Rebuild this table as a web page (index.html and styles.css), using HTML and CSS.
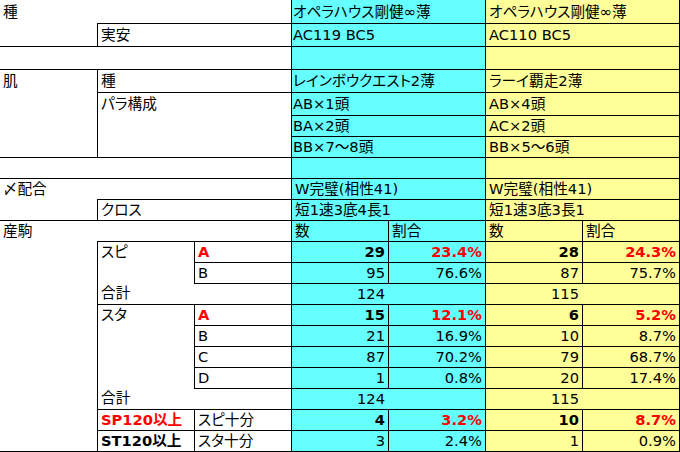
FILE: index.html
```html
<!DOCTYPE html>
<html lang="ja">
<head>
<meta charset="utf-8">
<title>配合比較</title>
<link rel="stylesheet" href="styles.css">
</head>
<body>
<div class="sheet">
  <!-- row 0 -->
  <div class="c hi rs2 r0">種</div>
  <div class="c hi s2"></div>
  <div class="c hi s2 l cy cyt r0">オペラハウス剛健∞薄</div>
  <div class="c hi s2 l ye r0">オペラハウス剛健∞薄</div>
  <!-- row 1 -->
  <div class="c hi s2 t l">実安</div>
  <div class="c hi s2 t l cy cyt">AC119 BC5</div>
  <div class="c hi s2 t l ye">AC110 BC5</div>
  <!-- row 2 -->
  <div class="c hi s3 t"></div>
  <div class="c hi s2 t l cy"></div>
  <div class="c hi s2 t l ye"></div>
  <!-- row 3 -->
  <div class="c hi rs4 t">肌</div>
  <div class="c hi s2 t l">種</div>
  <div class="c hi s2 t l cy cyt">レインボウクエスト2薄</div>
  <div class="c hi s2 t l ye">ラーイ覇走2薄</div>
  <!-- row 4 -->
  <div class="c hi s2 rs3 t l">パラ構成</div>
  <div class="c hi s2 t l cy cyt">AB×1頭</div>
  <div class="c hi s2 t l ye">AB×4頭</div>
  <!-- row 5 -->
  <div class="c s2 t l cy cyt">BA×2頭</div>
  <div class="c s2 t l ye">AC×2頭</div>
  <!-- row 6 -->
  <div class="c s2 t l cy cyt">BB×7～8頭</div>
  <div class="c s2 t l ye">BB×5～6頭</div>
  <!-- row 7 -->
  <div class="c s3 t"></div>
  <div class="c s2 t l cy"></div>
  <div class="c s2 t l ye"></div>
  <!-- row 8 -->
  <div class="c rs2 t">〆配合</div>
  <div class="c s2 t"></div>
  <div class="c s2 t l cy">W完璧(相性41)</div>
  <div class="c s2 t l ye">W完璧(相性41)</div>
  <!-- row 9 -->
  <div class="c s2 t l">クロス</div>
  <div class="c s2 t l cy">短1速3底4長1</div>
  <div class="c s2 t l ye">短1速3底3長1</div>
  <!-- row 10 -->
  <div class="c rs11 t">産駒</div>
  <div class="c s2 t"></div>
  <div class="c t l cy">数</div>
  <div class="c t l cy">割合</div>
  <div class="c t l ye">数</div>
  <div class="c t l ye">割合</div>
  <!-- row 11 -->
  <div class="c rs2 t l">スピ</div>
  <div class="c t l b red">A</div>
  <div class="c t l cy n b">29</div>
  <div class="c t l cy n b red">23.4%</div>
  <div class="c t l ye n b">28</div>
  <div class="c t l ye n b red">24.3%</div>
  <!-- row 12 -->
  <div class="c t l">B</div>
  <div class="c t l cy n">95</div>
  <div class="c t l cy n">76.6%</div>
  <div class="c t l ye n">87</div>
  <div class="c t l ye n">75.7%</div>
  <!-- row 13 -->
  <div class="c l">合計</div>
  <div class="c t"></div>
  <div class="c t l cy n">124</div>
  <div class="c t cy"></div>
  <div class="c t l ye n">115</div>
  <div class="c t ye"></div>
  <!-- row 14 -->
  <div class="c rs4 t l">スタ</div>
  <div class="c t l b red">A</div>
  <div class="c t l cy n b">15</div>
  <div class="c t l cy n b red">12.1%</div>
  <div class="c t l ye n b">6</div>
  <div class="c t l ye n b red">5.2%</div>
  <!-- row 15 -->
  <div class="c t l">B</div>
  <div class="c t l cy n">21</div>
  <div class="c t l cy n">16.9%</div>
  <div class="c t l ye n">10</div>
  <div class="c t l ye n">8.7%</div>
  <!-- row 16 -->
  <div class="c t l">C</div>
  <div class="c t l cy n">87</div>
  <div class="c t l cy n">70.2%</div>
  <div class="c t l ye n">79</div>
  <div class="c t l ye n">68.7%</div>
  <!-- row 17 -->
  <div class="c t l">D</div>
  <div class="c t l cy n">1</div>
  <div class="c t l cy n">0.8%</div>
  <div class="c t l ye n">20</div>
  <div class="c t l ye n">17.4%</div>
  <!-- row 18 -->
  <div class="c l">合計</div>
  <div class="c t"></div>
  <div class="c t l cy n">124</div>
  <div class="c t cy"></div>
  <div class="c t l ye n">115</div>
  <div class="c t ye"></div>
  <!-- row 19 -->
  <div class="c t l b red">SP120以上</div>
  <div class="c t l">スピ十分</div>
  <div class="c t l cy n b">4</div>
  <div class="c t l cy n b red">3.2%</div>
  <div class="c t l ye n b">10</div>
  <div class="c t l ye n b red">8.7%</div>
  <!-- row 20 -->
  <div class="c t l b">ST120以上</div>
  <div class="c t l">スタ十分</div>
  <div class="c t l cy n">3</div>
  <div class="c t l cy n">2.4%</div>
  <div class="c t l ye n">1</div>
  <div class="c t l ye n">0.9%</div>
</div>
</body>
</html>
```

FILE: styles.css
```css
html, body {
  margin: 0;
  padding: 0;
  background: #ffffff;
}

.sheet {
  display: grid;
  grid-template-columns: repeat(7, 97px);
  grid-template-rows: repeat(5, 23px) repeat(16, 21px);
  width: max-content;
  border-right: 1px solid #000;
  border-bottom: 1px solid #000;
  font-family: "DejaVu Sans", "Noto Sans CJK JP", sans-serif;
  font-feature-settings: "palt" 1;
  font-size: 14.67px;
  color: #000;
}

.c {
  box-sizing: border-box;
  white-space: nowrap;
  line-height: 20px;
  padding: 0 3px 0 3px;
  min-width: 0;
}

.hi { line-height: 22px; }
.r0 { padding-top: 1px; }

.t { border-top: 1px solid #000; }
.l { border-left: 1px solid #000; }

.s2 { grid-column: span 2; }
.s3 { grid-column: span 3; }
.rs2 { grid-row: span 2; }
.rs3 { grid-row: span 3; }
.rs4 { grid-row: span 4; }
.rs11 { grid-row: span 11; }

.cy { background: #66ffff; }
.ye { background: #ffff99; }
.cyt { padding-left: 1px; }

.n { text-align: right; padding-right: 3px; }
.b { font-weight: bold; }
.red { color: #ff0000; }
```
